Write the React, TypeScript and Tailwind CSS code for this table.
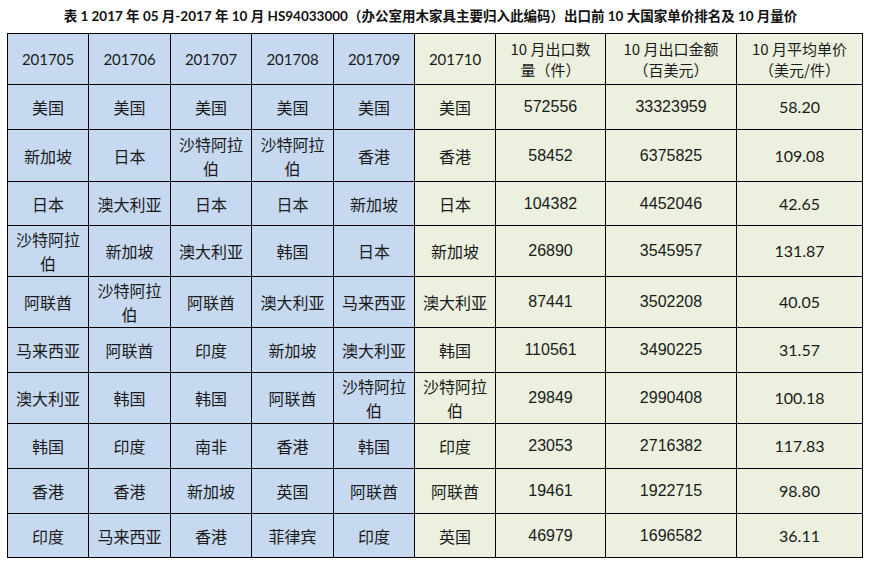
const cjk = "font-['Noto_Sans_CJK_SC',sans-serif]";

const headers = ["201705", "201706", "201707", "201708", "201709", "201710"];

const rows: string[][] = [
  ["美国", "美国", "美国", "美国", "美国", "美国", "572556", "33323959", "58.20"],
  ["新加坡", "日本", "沙特阿拉伯", "沙特阿拉伯", "香港", "香港", "58452", "6375825", "109.08"],
  ["日本", "澳大利亚", "日本", "日本", "新加坡", "日本", "104382", "4452046", "42.65"],
  ["沙特阿拉伯", "新加坡", "澳大利亚", "韩国", "日本", "新加坡", "26890", "3545957", "131.87"],
  ["阿联酋", "沙特阿拉伯", "阿联酋", "澳大利亚", "马来西亚", "澳大利亚", "87441", "3502208", "40.05"],
  ["马来西亚", "阿联酋", "印度", "新加坡", "澳大利亚", "韩国", "110561", "3490225", "31.57"],
  ["澳大利亚", "韩国", "韩国", "阿联酋", "沙特阿拉伯", "沙特阿拉伯", "29849", "2990408", "100.18"],
  ["韩国", "印度", "南非", "香港", "韩国", "印度", "23053", "2716382", "117.83"],
  ["香港", "香港", "新加坡", "英国", "阿联酋", "阿联酋", "19461", "1922715", "98.80"],
  ["印度", "马来西亚", "香港", "菲律宾", "印度", "英国", "46979", "1696582", "36.11"],
];

const rowHeights = ["h-[45px]", "h-[52px]", "h-[44px]", "h-[51px]", "h-[51px]", "h-[45px]", "h-[51px]", "h-[45px]", "h-[45px]", "h-[44px]"];

const blue = "bg-[#c6d9f0]";
const green = "bg-[#ebf1de]";
const cell = "border border-black px-1 text-center align-middle text-[#1a1a1a]";

function cellFont(i: number) {
  if (i < 6) return `${cjk} text-[16px] leading-[24px]`;
  if (i < 8) return "font-['Liberation_Sans',sans-serif] text-[16px]";
  return "font-['Lato',sans-serif] text-[16px]";
}

export default function App() {
  return (
    <div className="h-[564px] w-[869px] bg-white pt-[7px]">
      <h1 className="h-[26px] pr-[8px] text-center text-[13.5px] font-bold leading-[18px] text-[#111] font-['Lato','Noto_Sans_CJK_SC',sans-serif]">
        表 1 2017 年 05 月-2017 年 10 月 HS94033000（办公室用木家具主要归入此编码）出口前 10 大国家单价排名及 10 月量价
      </h1>
      <div className="pl-[7px]">
        <table className="w-[855px] table-fixed border-collapse">
          <colgroup>
            <col className="w-[81px]" />
            <col className="w-[82px]" />
            <col className="w-[81px]" />
            <col className="w-[82px]" />
            <col className="w-[81px]" />
            <col className="w-[81px]" />
            <col className="w-[110px]" />
            <col className="w-[131px]" />
            <col className="w-[126px]" />
          </colgroup>
          <thead>
            <tr className="h-[51px]">
              {headers.map((h, i) => (
                <th key={h} className={`${cell} ${i < 5 ? blue : green} font-['Lato',sans-serif] text-[15px] font-normal`}>
                  {h}
                </th>
              ))}
              <th className={`${cell} ${green} ${cjk} text-[15px] font-normal leading-[21px]`}>
                10 月出口数<br />量（件）
              </th>
              <th className={`${cell} ${green} ${cjk} text-[15px] font-normal leading-[21px]`}>
                10 月出口金额<br />（百美元）
              </th>
              <th className={`${cell} ${green} ${cjk} text-[15px] font-normal leading-[21px]`}>
                10 月平均单价<br />（美元/件）
              </th>
            </tr>
          </thead>
          <tbody>
            {rows.map((r, ri) => (
              <tr key={ri} className={rowHeights[ri]}>
                {r.map((v, i) => (
                  <td key={i} className={`${cell} ${i < 5 ? blue : green} ${cellFont(i)}`}>
                    {v}
                  </td>
                ))}
              </tr>
            ))}
          </tbody>
        </table>
      </div>
    </div>
  );
}
